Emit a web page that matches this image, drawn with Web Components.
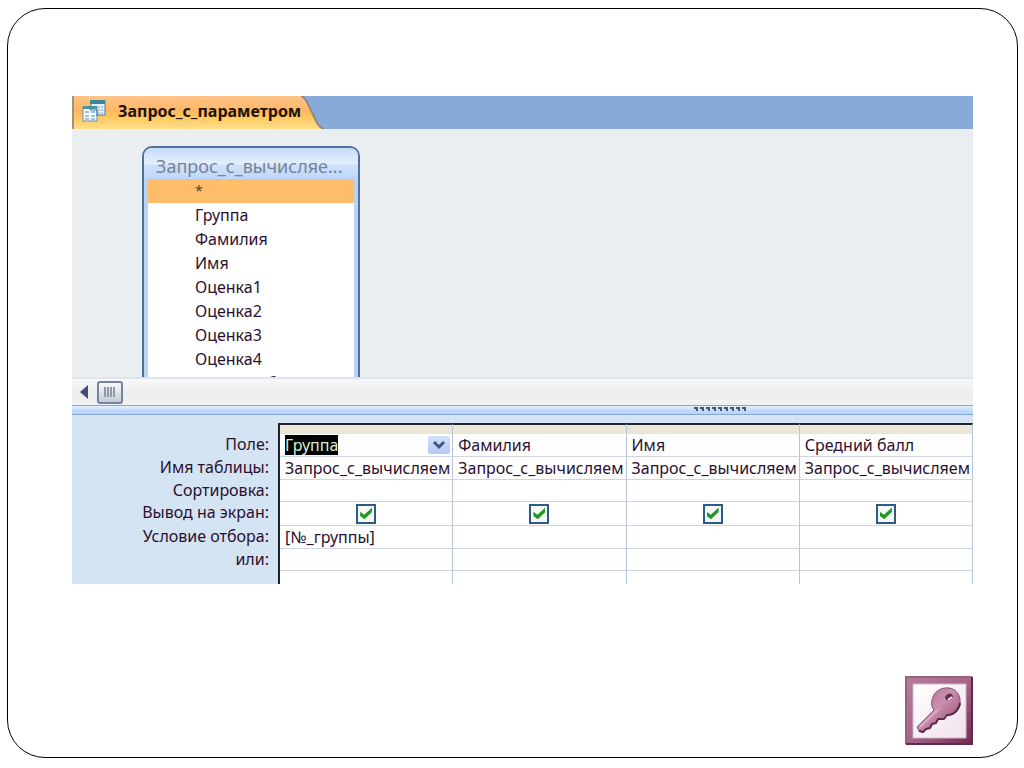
<!DOCTYPE html>
<html lang="ru">
<head>
<meta charset="utf-8">
<meta name="viewport" content="width=device-width, initial-scale=1">
<title>Запрос_с_параметром</title>
<style>
  body {
    margin: 0;
    background: #fff;
    color: #2b1030;
    font: 16px/22px "Noto Sans", "Open Sans", sans-serif;
  }
</style>
</head>
<body>
<slide-frame>
  <query-window>
    <query-tab slot="tab">Запрос_с_параметром</query-tab>
    <field-list heading="Запрос_с_вычисляе..." fields="*,Группа,Фамилия,Имя,Оценка1,Оценка2,Оценка3,Оценка4,Средний балл"></field-list>
    <scroll-track slot="bottom"></scroll-track>
    <pane-splitter slot="bottom"></pane-splitter>
    <design-grid slot="bottom"></design-grid>
  </query-window>
  <access-logo slot="logo"></access-logo>
</slide-frame>

<script>
class SlideFrame extends HTMLElement {
  constructor() {
    super();
    this.attachShadow({ mode: "open" }).innerHTML = `
      <style>
        :host {
          display: flex;
          flex-direction: column;
          justify-content: space-between;
          gap: 24px;
          box-sizing: border-box;
          min-height: calc(100vh - 18px);
          margin: 8px 6px 10px 7px;
          padding: 87px 44px 12px 64px;
          border: 1px solid #000;
          border-radius: 38px;
        }
        footer {
          display: flex;
          justify-content: flex-end;
        }
      </style>
      <slot></slot>
      <footer><slot name="logo"></slot></footer>
    `;
  }
}

class QueryWindow extends HTMLElement {
  constructor() {
    super();
    this.attachShadow({ mode: "open" }).innerHTML = `
      <style>
        :host {
          display: block;
          overflow: hidden;
        }
        .tabs {
          display: flex;
          height: 33px;
          background: #88aad8;
        }
        .surface {
          display: flex;
          align-items: flex-start;
          box-sizing: border-box;
          height: 248px;
          padding: 17px 70px 0;
          overflow: hidden;
          background: #eaeef1;
        }
      </style>
      <div class="tabs"><slot name="tab"></slot></div>
      <div class="surface"><slot></slot></div>
      <slot name="bottom"></slot>
    `;
  }
}

class QueryTab extends HTMLElement {
  constructor() {
    super();
    this.attachShadow({ mode: "open" }).innerHTML = `
      <style>
        :host {
          display: flex;
          height: 33px;
        }
        .label {
          display: flex;
          align-items: center;
          gap: 12px;
          padding: 0 0 4px 8px;
          border-left: 2px solid #a5917c;
          box-sizing: border-box;
          background: linear-gradient(#ffc488, #ffb766 45%, #ffc45c 60%, #ffe08a);
          color: #1c1408;
          font-size: 16px;
          font-weight: bold;
          white-space: nowrap;
        }
        svg { display: block; flex: none; }
      </style>
      <div class="label">
        <svg width="24" height="24" viewBox="0 0 24 24" aria-hidden="true">
          <rect x="9" y="2" width="14" height="14" fill="#e6f2fb" stroke="#56789c"/>
          <rect x="8" y="1" width="15" height="4" fill="#3a8794"/>
          <path d="M17 7v8M20 7v8" stroke="#a9cbe6" stroke-width="2" stroke-dasharray="2 1"/>
          <rect x="1" y="8" width="14" height="14" fill="#f8fcff" stroke="#6a88ac"/>
          <rect x="1" y="7" width="14" height="3" fill="#4b95a0"/>
          <path d="M3 13h4M9 13h4M3 17h4M9 17h4M3 20h4M9 20h4" stroke="#9fc2e4" stroke-width="2"/>
          <path d="M8 7v4h7v6" fill="none" stroke="#47799a"/>
        </svg>
        <slot></slot>
      </div>
      <svg width="24" height="33" viewBox="0 0 24 33" aria-hidden="true">
        <defs>
          <linearGradient id="fill" x1="0" y1="0" x2="0" y2="1">
            <stop offset="0" stop-color="#ffc488"/>
            <stop offset=".45" stop-color="#ffb766"/>
            <stop offset=".6" stop-color="#ffc45c"/>
            <stop offset="1" stop-color="#ffe08a"/>
          </linearGradient>
        </defs>
        <path d="M0 0c3 1 5 4 7 8l8 17c2 4 4 7 8 8H0z" fill="url(#fill)"/>
        <path d="M0 0c3 1 5 4 7 8l8 17c2 4 4 7 8 8" fill="none" stroke="#938a7c" stroke-width="2"/>
      </svg>
    `;
  }
}

class FieldList extends HTMLElement {
  connectedCallback() {
    const fields = this.getAttribute("fields").split(",");
    this.attachShadow({ mode: "open" }).innerHTML = `
      <style>
        :host {
          display: block;
          box-sizing: border-box;
          width: 218px;
          border: 2px solid #53709c;
          border-radius: 10px 10px 0 0;
          background: #b9d3f3;
          overflow: hidden;
        }
        h2 {
          box-sizing: border-box;
          height: 31px;
          margin: 0;
          padding: 6px 0 0 12px;
          background: linear-gradient(#c8dcf8, #e4effd 50%, #cfe2fb 55%, #bcd6fa);
          color: #7a8296;
          font-size: 18px;
          font-weight: normal;
          line-height: 24px;
          white-space: nowrap;
        }
        ul {
          margin: 0 4px;
          padding: 0;
          background: #fff;
          list-style: none;
        }
        li {
          height: 24px;
          padding-left: 47px;
          line-height: 24px;
        }
        li:first-child {
          background: #ffbc69;
          color: #5a4430;
          font-size: 14px;
        }
      </style>
      <h2>${this.getAttribute("heading")}</h2>
      <ul>${fields.map((name) => `<li>${name}</li>`).join("")}</ul>
    `;
  }
}

class ScrollTrack extends HTMLElement {
  constructor() {
    super();
    this.attachShadow({ mode: "open" }).innerHTML = `
      <style>
        :host {
          display: flex;
          align-items: center;
          gap: 8px;
          box-sizing: border-box;
          height: 28px;
          padding-left: 7px;
          border-top: 2px solid #dde5f0;
          background: linear-gradient(#f8f8f9, #ececed 60%, #f2f2f3);
        }
        button {
          display: grid;
          place-items: center;
          height: 23px;
          padding: 0;
          border: 0;
          background: none;
        }
        .arrow { width: 10px; }
        .thumb {
          width: 26px;
          border: 2px solid #74839e;
          border-radius: 3px;
          background: linear-gradient(#f6f8fa, #dfe4ea 50%, #c3cbd6);
        }
      </style>
      <button class="arrow" aria-label="Прокрутить влево">
        <svg width="10" height="16" viewBox="0 0 10 16"><path d="M9 1v14L1 8z" fill="#3d4f78"/></svg>
      </button>
      <button class="thumb" aria-label="Полоса прокрутки">
        <svg width="14" height="12" viewBox="0 0 14 12"><path d="M2 1v10M5 1v10M8 1v10M11 1v10" stroke="#8f98a6" stroke-width="2"/></svg>
      </button>
    `;
  }
}

class PaneSplitter extends HTMLElement {
  constructor() {
    super();
    const dots = Array.from({ length: 9 }, (_, i) => `M${i * 6} 1h4v4h-2v-2h-2z`).join("");
    this.attachShadow({ mode: "open" }).innerHTML = `
      <style>
        :host {
          display: flex;
          justify-content: flex-end;
          box-sizing: border-box;
          height: 10px;
          padding-right: 225px;
          border: solid #83a6d6;
          border-width: 1px 0;
          background: linear-gradient(#e3efff, #c4dcfb 50%, #b7d4fa);
        }
      </style>
      <svg width="54" height="6" viewBox="0 0 54 6" aria-hidden="true">
        <path d="${dots}" fill="#4a5468"/>
      </svg>
    `;
  }
}

class DesignGrid extends HTMLElement {
  constructor() {
    super();
    const names = ["Группа", "Фамилия", "Имя", "Средний балл"];
    const row = (label, cells) => `
      <tr><th scope="row">${label}</th>${cells.map((cell) => `<td>${cell}</td>`).join("")}</tr>`;
    const blank = ["", "", "", ""];

    this.attachShadow({ mode: "open" }).innerHTML = `
      <style>
        :host {
          display: block;
          padding-top: 8px;
          background: #d5e4f2;
        }
        table {
          width: 100%;
          height: 161px;
          border-spacing: 0;
          table-layout: fixed;
        }
        .labels { width: 208px; }
        th, td {
          box-sizing: border-box;
          padding: 0;
          line-height: 20px;
          white-space: nowrap;
          overflow: hidden;
        }
        th {
          padding-right: 9px;
          border-right: 2px solid #20242c;
          font-weight: normal;
          text-align: right;
          vertical-align: top;
        }
        td {
          padding: 0 2px 0 5px;
          border-right: 1px solid #b4c4da;
          border-bottom: 1px solid #cdd5e4;
          background: #fff;
        }
        td:has(.show) { padding: 0; }
        .head th, .head td {
          height: 11px;
          line-height: 0;
        }
        .head th { border-right: 0; }
        .head td {
          border-top: 2px solid #20242c;
          border-bottom-color: #e4e4e4;
          background: #ebe7d6;
        }
        .head th div {
          width: 2px;
          height: 11px;
          margin: 0 -9px 0 auto;
          background: #20242c;
        }
        .rest th, .rest td { height: 13px; line-height: 0; border-bottom: 0; }
        .combo {
          display: flex;
          align-items: center;
          justify-content: space-between;
        }
        input {
          box-sizing: border-box;
          height: 20px;
          padding: 0;
          border: 0;
          outline: 0;
          background: none;
          color: inherit;
          font: inherit;
        }
        .name {
          field-sizing: content;
          background: #000;
          color: #d4efcf;
        }
        .criteria { display: block; width: 100%; }
        button {
          display: grid;
          place-items: center;
          width: 22px;
          height: 18px;
          padding: 0;
          border: 0;
          border-radius: 2px;
          background: linear-gradient(#d3e0fc, #b3c8f5);
        }
        .show {
          appearance: none;
          display: grid;
          place-items: center;
          width: 20px;
          height: 20px;
          margin: 0 auto;
          border: 2px solid #2d5a86;
          background: #f6f8f6;
        }
        .show:checked::before {
          content: "";
          width: 12px;
          height: 12px;
          background: #1f9a24;
          clip-path: polygon(0 34%, 34% 60%, 100% 0, 100% 36%, 36% 98%, 0 70%);
        }
      </style>
      <table>
        <colgroup><col class="labels"><col span="4"></colgroup>
        <tbody>
          <tr class="head"><th><div></div></th><td></td><td></td><td></td><td></td></tr>
          ${row("Поле:", names.map((name, i) => i ? name : `
            <div class="combo">
              <input class="name" aria-label="Поле" value="${name}">
              <button aria-label="Выбрать поле">
                <svg width="14" height="10" viewBox="0 0 14 10"><path d="M2 2l5 5 5-5" fill="none" stroke="#3f5680" stroke-width="3"/></svg>
              </button>
            </div>`))}
          ${row("Имя таблицы:", names.map(() => "Запрос_с_вычисляем"))}
          ${row("Сортировка:", blank)}
          ${row("Вывод на экран:", names.map((name) => `<input class="show" type="checkbox" aria-label="Вывод на экран: ${name}" checked>`))}
          ${row(`<label for="criteria">Условие отбора:</label>`, [`<input class="criteria" id="criteria" value="[№_группы]">`, "", "", ""])}
          ${row("или:", blank)}
          <tr class="rest"><th></th><td></td><td></td><td></td><td></td></tr>
        </tbody>
      </table>
    `;
  }
}

class AccessLogo extends HTMLElement {
  constructor() {
    super();
    this.attachShadow({ mode: "open" }).innerHTML = `
      <style>
        :host { display: block; }
        svg { display: block; }
      </style>
      <svg width="68" height="69" viewBox="0 0 68 69" role="img" aria-label="Microsoft Access">
        <defs>
          <linearGradient id="frame" x1="0" y1="0" x2="1" y2="1">
            <stop offset="0" stop-color="#b57f9c"/>
            <stop offset=".5" stop-color="#a5668a"/>
            <stop offset="1" stop-color="#6f2850"/>
          </linearGradient>
          <linearGradient id="paper" x1="0" y1="0" x2="1" y2="1">
            <stop offset="0" stop-color="#fff"/>
            <stop offset="1" stop-color="#f1e2ec"/>
          </linearGradient>
          <linearGradient id="key" x1="0" y1="0" x2="1" y2="1">
            <stop offset="0" stop-color="#a4678a"/>
            <stop offset=".45" stop-color="#cb8fae"/>
            <stop offset="1" stop-color="#8a4569"/>
          </linearGradient>
        </defs>
        <rect width="68" height="69" rx="2" fill="url(#frame)"/>
        <path d="M1 68V1h66" fill="none" stroke="#99607f" stroke-width="2"/>
        <path d="M67 1v67H1" fill="none" stroke="#642849" stroke-width="2"/>
        <rect x="8" y="8" width="53" height="54" fill="url(#paper)" stroke="#d6b4c8"/>
        <path d="M28 21c2-6 9-10 16-9 8 1 12 8 11 16-1 7-7 12-13 11l-3 4h-6l-2 4-4 1-2 4-4 1-3 3-4-1-2-4 17-17c-3-4-3-8-1-13z" fill="url(#key)" stroke="#8a5472" stroke-linejoin="round"/>
        <path d="M55 27c-1 7-7 13-13 12l-3 4h-6l-2 4-4 1-2 4-4 1-3 3-4-1" fill="none" stroke="#5f2c48" stroke-width="2" stroke-linejoin="round"/>
        <path d="M15 51l19-18" stroke="#dcaac3" stroke-width="2"/>
        <ellipse cx="44" cy="21" rx="4" ry="3" fill="#5c2f4b" transform="rotate(-35 44 21)"/>
        <path d="M43 24l4-3" stroke="#f2dce8" stroke-width="2"/>
      </svg>
    `;
  }
}

customElements.define("slide-frame", SlideFrame);
customElements.define("query-window", QueryWindow);
customElements.define("query-tab", QueryTab);
customElements.define("field-list", FieldList);
customElements.define("scroll-track", ScrollTrack);
customElements.define("pane-splitter", PaneSplitter);
customElements.define("design-grid", DesignGrid);
customElements.define("access-logo", AccessLogo);
</script>
</body>
</html>
